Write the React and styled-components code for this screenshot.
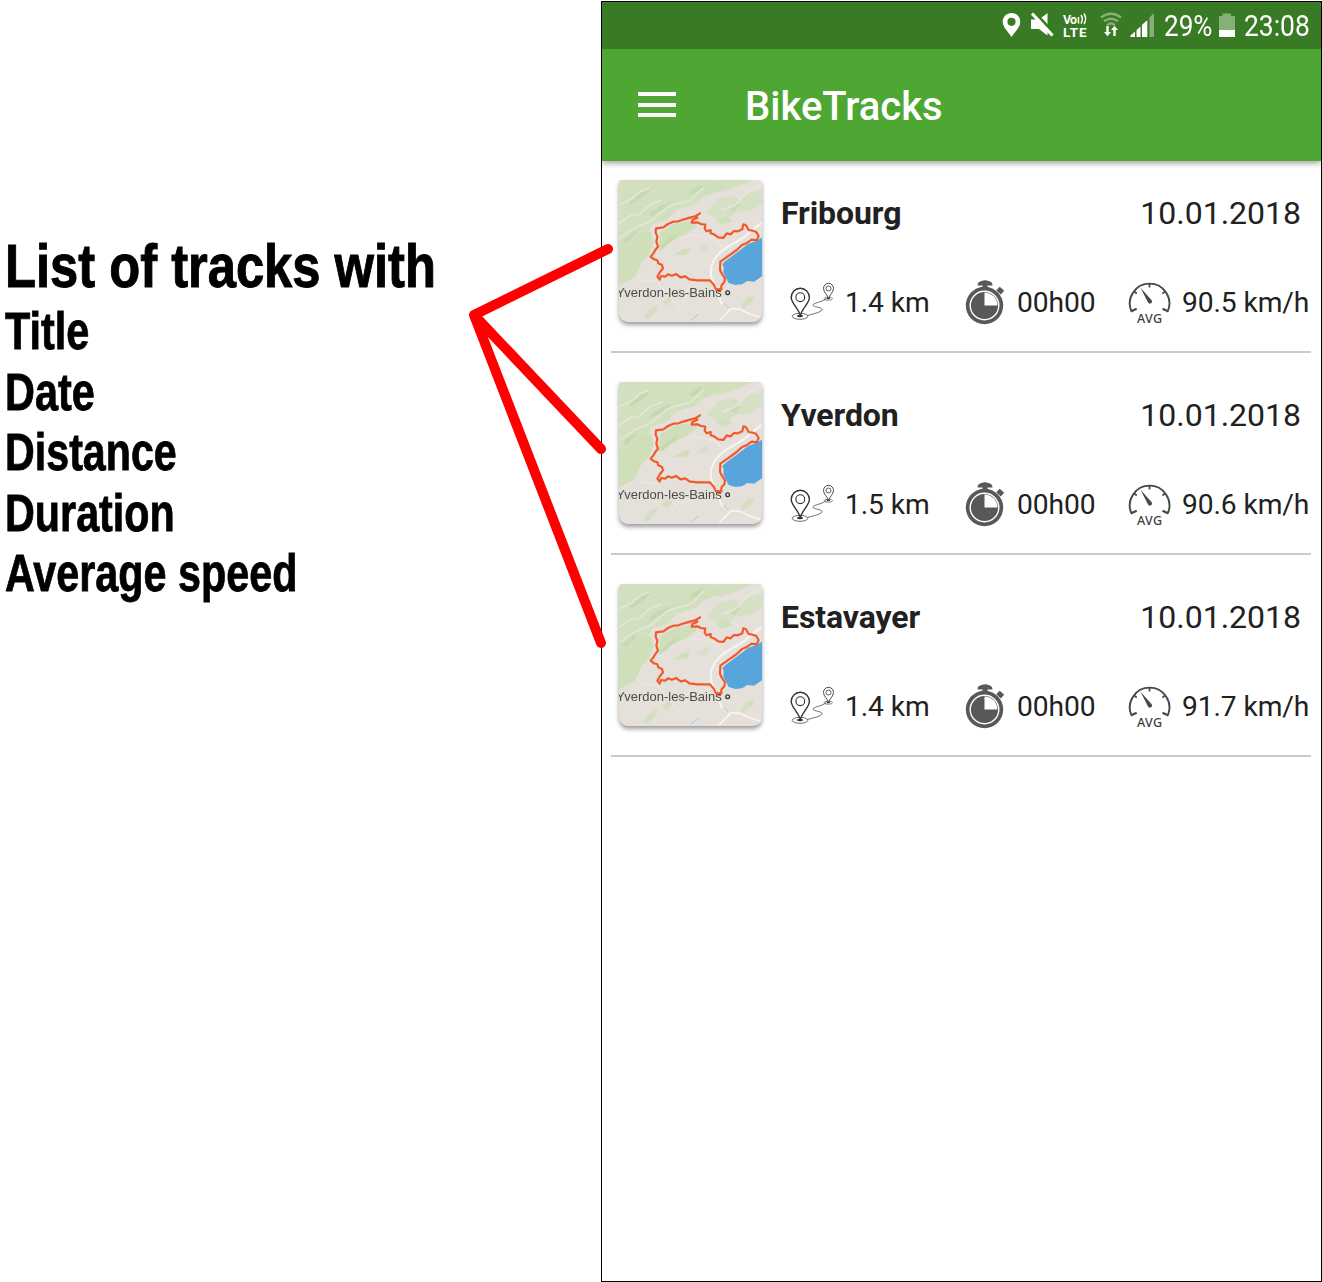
import React from "react";
import styled, { createGlobalStyle } from "styled-components";

const GlobalStyle = createGlobalStyle`
  *, *::before, *::after { box-sizing: border-box; }
  html, body { margin: 0; padding: 0; background: #fff; overflow: hidden; }
  svg { display: block; flex: none; }
`;

const Page = styled.div`
  position: relative;
  display: flex;
  width: 1322px;
  height: 1282px;
  padding-top: 1px;
  background: #fff;
`;

/* ---------- annotation column ---------- */

const Notes = styled.section`
  flex: none;
  width: 601px;
  padding: 232px 0 0 5px;
  font-family: "Liberation Sans", Arial, sans-serif;
  font-weight: 700;
  color: #000;
`;

const NotesTitle = styled.h1`
  margin: 0 0 2px;
  font-size: 61px;
  line-height: 67px;
  width: max-content;
  white-space: nowrap;
  transform: scaleX(${(p) => p.$stretch});
  transform-origin: 0 50%;
  -webkit-text-stroke: 1px #000;
`;

const NotesList = styled.ul`
  list-style: none;
  margin: 0;
  padding: 0;
`;

const NotesItem = styled.li`
  font-size: 51px;
  line-height: 60.6px;
  width: max-content;
  white-space: nowrap;
  transform: scaleX(${(p) => p.$stretch});
  transform-origin: 0 50%;
  -webkit-text-stroke: 0.8px #000;
`;

const Pointers = styled.svg`
  position: absolute;
  left: 460px;
  top: 230px;
  pointer-events: none;
`;

/* ---------- phone ---------- */

const Phone = styled.main`
  flex: none;
  display: flex;
  flex-direction: column;
  width: 721px;
  height: 1281px;
  border: 1px solid #000;
  background: #fff;
  font-family: Roboto, sans-serif;
  color: #212121;
`;

const StatusBar = styled.div`
  flex: none;
  display: flex;
  justify-content: flex-end;
  align-items: center;
  height: 47px;
  padding-right: 11px;
  background: #397a25;
  color: #fff;
`;

const StatusText = styled.span`
  display: block;
  width: ${(p) => p.$width}px;
  padding-left: ${(p) => p.$inset || 0}px;
  font-size: 30px;
  line-height: 47px;
  white-space: nowrap;

  > span {
    display: inline-block;
    transform: scaleX(${(p) => p.$stretch});
    transform-origin: 0 50%;
  }
`;

const AppBar = styled.header`
  flex: none;
  display: flex;
  align-items: center;
  gap: 69px;
  height: 112px;
  padding: 2px 0 0 36px;
  background: #4fa733;
  color: #fff;
  box-shadow: 0 2px 6px rgba(0, 0, 0, 0.4);
  clip-path: inset(0 0 -14px 0);
`;

const MenuButton = styled.button`
  display: flex;
  flex-direction: column;
  justify-content: space-between;
  width: 38px;
  height: 25px;
  margin-top: -3px;
  padding: 0;
  border: 0;
  background: none;
`;

const MenuLine = styled.span`
  height: 4px;
  background: #fff;
`;

const AppTitle = styled.h2`
  margin: 2px 0 0;
  font-size: 40px;
  line-height: 48px;
  font-weight: 500;
`;

const TrackList = styled.ul`
  list-style: none;
  margin: 0;
  padding: 0 10px 0 9px;
`;

const TrackRow = styled.li`
  display: flex;
  height: 202px;
  padding: 29px 0 0 8px;
  border-bottom: 2px solid #cbcbcb;

  &:first-child {
    height: 192px;
    padding-top: 19px;
  }
`;

const Thumb = styled.div`
  flex: none;
  width: 143px;
  height: 142px;
  margin-right: 19px;
  border-radius: 3px 3px 9px 9px;
  overflow: hidden;
  filter: drop-shadow(0 3px 2px rgba(0, 0, 0, 0.38));
`;

const Details = styled.div`
  flex: 1;
  display: flex;
  flex-direction: column;
`;

const Heading = styled.div`
  display: flex;
  justify-content: space-between;
  height: 97px;
  padding: 14px 10px 0 0;
  font-size: 32px;
  line-height: 38px;
`;

const Name = styled.strong`
  font-weight: 700;
  letter-spacing: -0.08px;
`;

const Stats = styled.div`
  display: flex;
  align-items: center;
`;

const Stat = styled.div`
  display: flex;
  align-items: center;
  height: 50px;
  width: ${(p) => p.$width}px;
  padding-left: ${(p) => p.$inset}px;
  font-size: 28.2px;
  line-height: 34px;
  white-space: nowrap;
`;

const StatValue = styled.span`
  margin-left: ${(p) => p.$gap}px;
  margin-top: 1px;
  letter-spacing: -0.1px;
`;

/* ---------- icons ---------- */

/* location, mute, VoLTE, wi-fi and cell signal, laid out on one strip */
const StatusIcons = () => (
  <svg width="163" height="47" viewBox="1000 2 163 47">
    <path
      fill="#fff"
      fillRule="evenodd"
      d="M1011.5 13c-5 0-8.800 3.900-8.800 8.700 0 5.600 5.600 10 8.800 15.300 3.200-5.300 8.800-9.700 8.800-15.300 0-4.800-3.800-8.700-8.800-8.700zm0 4.700a4.100 4.100 0 1 1 0 8.200 4.100 4.100 0 0 1 0-8.200z"
    />
    <path fill="#fff" d="M1031 19.500h8l8.500-6.500v22.500l-8.500-6.500h-8z" />
    <path d="M1034 12l20 21" stroke="#397a25" strokeWidth="3" />
    <path d="M1032 13.500l20.500 22" stroke="#fff" strokeWidth="3.200" />
    <g fill="#fff" fontFamily="Roboto, sans-serif" fontWeight="700">
      <text x="1063" y="23.500" fontSize="12.500" textLength="14">Vo</text>
      <text x="1063" y="37" fontSize="13.500" textLength="23.500">LTE</text>
    </g>
    <path d="M1078.500 17v6.500M1081 15c1.600 2.500 1.600 6 0 8.500M1084 13.500c2 3 2 7.500 0 10.500" stroke="#fff" strokeWidth="1.500" fill="none" />
    <g fill="none" stroke="#86b078" strokeWidth="2.500">
      <path d="M1101 17.500q10-7.500 20 0" />
      <path d="M1104 21.300q7-5.200 14 0" />
      <path d="M1107 25q4-3 8 0" />
    </g>
    <path fill="#fff" d="M1106.300 26h2.400v6h2.300l-3.500 4.200-3.500-4.200h2.300zM1113.300 36h2.400v-6h2.300l-3.500-4.200-3.500 4.200h2.300z" />
    <path fill="#fff" d="M1130.500 37v-1.500l4.500-4V37zM1136.500 37v-6.800l4-3.700V37zM1142 37V24.700l5.300-4.500V37z" />
    <path fill="#86b078" d="M1149.500 37V17.500l4.500-4.500V37z" />
  </svg>
);

const BatteryIcon = () => (
  <svg width="27" height="47" viewBox="0 0 27 47">
    <path fill="#86b078" d="M2 14h3.500v-2.500h8.500V14h4v15H2z" />
    <path fill="#fff" d="M2 28h16v7H2z" />
  </svg>
);

const RouteIcon = () => (
  <svg width="46" height="44" viewBox="0 -2 46 44" fill="none" stroke="#333">
    <ellipse cx="11" cy="34.300" rx="7.800" ry="3" strokeWidth="0.700" />
    <path strokeWidth="1.400" fill="#fff" d="M11.300 33.500C9.500 26.500 2.200 21 2.200 15.500a9.100 9.300 0 0 1 18.200 0c0 5.500-7.300 11-9.100 18z" />
    <circle cx="11.300" cy="15.200" r="4.400" strokeWidth="1.100" />
    <ellipse cx="11" cy="34" rx="3" ry="1.200" fill="#333" stroke="none" />
    <path strokeWidth="0.700" d="M18.500 33.500c7-2 15.500-3.800 14.500-6.300-.8-2-8.500-2-9-4 -.4-2.500 8.500-2.500 13-6.500" />
    <ellipse cx="39.300" cy="16.700" rx="4.200" ry="1.500" strokeWidth="0.600" />
    <path strokeWidth="0.900" fill="#fff" d="M39.500 16.500c-1-3.800-5-6.300-5-10a5 5.200 0 0 1 10 0c0 3.700-4 6.200-5 10z" />
    <circle cx="39.500" cy="6.500" r="2.500" strokeWidth="0.800" />
    <ellipse cx="39.300" cy="16.500" rx="1.800" ry="0.800" fill="#333" stroke="none" />
  </svg>
);

const StopwatchIcon = () => (
  <svg width="40" height="46" viewBox="0 0 40 46">
    <path fill="#585858" d="M12.500 6.500c0-3 2-4 4-4.500q3.500-1.500 7 0c2 .5 4 1.500 4 4.500h-5v4h-5v-4z" />
    <path d="M33 9.500l4.500 4.200" stroke="#585858" strokeWidth="5" />
    <circle cx="19.500" cy="26.500" r="18.700" fill="#585858" />
    <circle cx="19.500" cy="26.500" r="14.300" fill="none" stroke="#fff" strokeWidth="1.400" />
    <path fill="#fff" d="M19.500 13.500a13 13 0 0 1 13 13h-13z" />
  </svg>
);

const GaugeIcon = () => (
  <svg width="44" height="46" viewBox="0.500 -1 44 46">
    <g fill="none" stroke="#484848">
      <path strokeWidth="1.900" d="M3.800 31a19.800 19.800 0 1 1 36.600 0" />
      <path strokeWidth="2.300" d="M3.200 31.500l6-2.700M41 31.500l-6-2.700" />
      <path strokeWidth="1.700" d="M22 3v4.500M6.500 11.500l2.800 2M37.700 11.500l-2.800 2" />
    </g>
    <path fill="#484848" d="M13 7.700l11.200 12.500a2.100 2.100 0 0 1-3.700 2.400z" />
    <text x="9.500" y="43" fontSize="12.500" textLength="25" fontFamily="Noto Sans, sans-serif" fontWeight="500" fill="#3d3d3d">
      AVG
    </text>
  </svg>
);

const MapPicture = () => (
  <svg width="143" height="142" viewBox="27 30 429 426" preserveAspectRatio="none">
    <rect x="27" y="30" width="429" height="426" fill="#e6e0da" />
    <g fill="#cfdfba">
      <path d="M27 30h400l-30 14-60 22-44 4-40 34-50 14-34 32-42 12-22 44-10 50-30 30-38 60z" opacity=".85" />
      <path d="M27 235l36-14 30-30 30-6 8 30-14 40-22 20-20 46-48 26z" />
      <path d="M144 236l8-50 44-26 46-6 20 14-40 30-30 12-40 32z" />
      <path d="M290 128l34-40 44-12 20 14 30-22 38-8v40l-34 22-46 6-24 22-34-4z" opacity=".7" />
      <path d="M190 256l30-20 20-2-10 20zM318 150l36-10 12 14-30 12zM262 60l60-20 20 8-50 30z" />
      <path d="M100 442l22-28 22-8-10 24-24 20zM156 396l20-14 14 8-20 18zM392 404l22-24 20 0-14 22-22 14zM200 372l20-8 14 8-22 8z" opacity=".8" />
      <path d="M262 240l24-18 14 6-18 18z" opacity=".7" />
    </g>
    <g fill="#bfd6a8" opacity=".6">
      <path d="M62 92l38-30 28-8-30 28-38 24zM120 130l30-22 42-16-34 28-40 22zM240 64l26-18 24-2-26 22-26 10z" />
      <path d="M154 226l32-28 28-14-26 26-32 26zM358 118l20-18 14 2-16 20zM40 210l34-28 8 6-36 34z" />
    </g>
    <g fill="none" stroke="#ece7e0" strokeWidth="5" opacity=".8">
      <path d="M27 104l40-18 22-20 30-12M27 160l36-24 20 0 40-34 34-12M27 206l50-34 46-18 50-44 70-20 40-40" />
      <path d="M205 205l50-12 58 12 30 30M90 330l50 4 44 50 40 50M240 345l-20 54M336 120l40-14 40-44 40-22" />
    </g>
    <path fill="#58a5dc" d="M456 203l-20 11-22 8-34 26-30 22-13 12 4 10-1 16 10 20 6 11 20 6 20-2 16-10 20 2 24-16z" />
    <g fill="none" stroke="#f8f4ef" strokeWidth="6" strokeLinejoin="round">
      <path d="M456 158l-24 18-36 30-42 24-22 16-18 20-12 28 2 30 14 30 16 44 24 22" />
      <path d="M456 444l-36-12-30-14-26-2-36 36" strokeWidth="5" />
      <path d="M340 400l16 16" strokeWidth="8" stroke="#dcd5ce" />
    </g>
    <path d="M242 452l24-20" stroke="#a9c9e4" strokeWidth="3" />
    <path
      fill="none"
      stroke="#f2592a"
      strokeWidth="6.500"
      strokeLinejoin="round"
      d="M270 130L258 138L240 143L222 148L205 154L190 155L174 162L160 172L138 175L137 188L142 200L139 215L144 230L136 240L130 250L122 260L132 268L142 271L145 280L156 285L159 295L150 306L142 320L149 329L153 318L166 320L174 313L186 317L198 312L212 322L226 319L238 328L262 331L300 331L312 345L318 358L326 362L333 356L335 345L343 337L345 325L336 312L330 300L331 275L345 265L380 240L395 226L412 218L425 209L440 211L446 198L438 185L428 182L416 180L408 166L400 163L397 178L384 184L372 183L362 193L350 190L340 204L325 202L312 193L302 190L302 180L290 184L284 176L286 164L272 162L264 157L245 158L247 150L262 143L255 139Z"
    />
    <path fill="#f2592a" d="M320 354l20 2-14 12z" />
    <text x="19" y="381" fontSize="39" textLength="316" lengthAdjust="spacingAndGlyphs" fontFamily="Liberation Sans, Arial, sans-serif" fill="#4d4b49">
      Yverdon-les-Bains
    </text>
    <circle cx="353" cy="368" r="5.500" fill="#fff" stroke="#333" strokeWidth="4" />
  </svg>
);

const tracks = [
  { name: "Fribourg", date: "10.01.2018", distance: "1.4 km", duration: "00h00", speed: "90.5 km/h" },
  { name: "Yverdon", date: "10.01.2018", distance: "1.5 km", duration: "00h00", speed: "90.6 km/h" },
  { name: "Estavayer", date: "10.01.2018", distance: "1.4 km", duration: "00h00", speed: "91.7 km/h" },
];

const fields = [
  ["Title", 0.812],
  ["Date", 0.812],
  ["Distance", 0.808],
  ["Duration", 0.81],
  ["Average speed", 0.81],
];

const Track = ({ track }) => (
  <TrackRow>
    <Thumb>
      <MapPicture />
    </Thumb>
    <Details>
      <Heading>
        <Name>{track.name}</Name>
        <span>{track.date}</span>
      </Heading>
      <Stats>
        <Stat $width={184} $inset={8}>
          <RouteIcon />
          <StatValue $gap={10}>{track.distance}</StatValue>
        </Stat>
        <Stat $width={163} $inset={0}>
          <StopwatchIcon />
          <StatValue $gap={12}>{track.duration}</StatValue>
        </Stat>
        <Stat $width={182} $inset={0}>
          <GaugeIcon />
          <StatValue $gap={10}>{track.speed}</StatValue>
        </Stat>
      </Stats>
    </Details>
  </TrackRow>
);

export default function App() {
  return (
    <>
      <GlobalStyle />
      <Page>
        <Notes>
          <NotesTitle $stretch={0.831}>List of tracks with</NotesTitle>
          <NotesList>
            {fields.map(([label, stretch]) => (
              <NotesItem key={label} $stretch={stretch}>
                {label}
              </NotesItem>
            ))}
          </NotesList>
        </Notes>
        <Phone>
          <StatusBar>
            <StatusIcons />
            <StatusText $width={54} $inset={1} $stretch={0.87}>
              <span>29%</span>
            </StatusText>
            <BatteryIcon />
            <StatusText $width={66} $stretch={0.88}>
              <span>23:08</span>
            </StatusText>
          </StatusBar>
          <AppBar>
            <MenuButton aria-label="Menu">
              <MenuLine />
              <MenuLine />
              <MenuLine />
            </MenuButton>
            <AppTitle>BikeTracks</AppTitle>
          </AppBar>
          <TrackList>
            {tracks.map((track) => (
              <Track key={track.name} track={track} />
            ))}
          </TrackList>
        </Phone>
        <Pointers width="160" height="430" viewBox="460 230 160 430">
          <path
            d="M608 249L474 315L601 449M474 315L601 643"
            fill="none"
            stroke="#f00"
            strokeWidth="10"
            strokeLinecap="round"
            strokeLinejoin="round"
          />
        </Pointers>
      </Page>
    </>
  );
}
